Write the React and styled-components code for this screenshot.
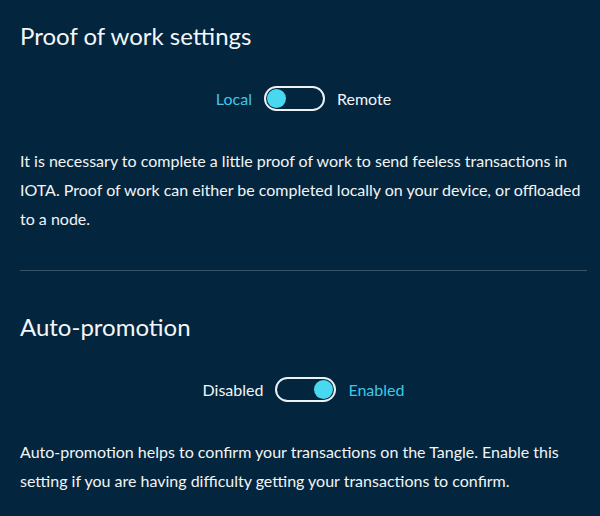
import React, { useState } from 'react'
import styled, { createGlobalStyle, css } from 'styled-components'

const GlobalStyle = createGlobalStyle`
  html, body {
    margin: 0;
    padding: 0;
    background: #03263e;
  }
  body {
    font-family: Lato, "Open Sans", sans-serif;
    color: #f2f4f6;
  }
`

const Page = styled.div`
  width: 600px;
  height: 516px;
  box-sizing: border-box;
  padding: 20px 13px 0 20px;
  background: #03263e;
  overflow: hidden;
`

const Section = styled.section`
  padding-bottom: 37px;
  ${props =>
    props.divided &&
    css`
      border-bottom: 1px solid #3a5467;
      margin-bottom: 40px;
    `}
`

const Title = styled.h2`
  margin: 0;
  font-size: 24px;
  font-weight: 400;
  line-height: 32px;
  color: #f4f6f8;
`

const ToggleRow = styled.div`
  display: flex;
  align-items: center;
  justify-content: center;
  gap: 12px;
  margin: 34px 0 35px;
  font-size: 16px;
`

const Label = styled.span`
  color: ${props => (props.active ? '#3fc6e6' : '#f2f4f6')};
  cursor: pointer;
`

const Switch = styled.button`
  position: relative;
  width: 61px;
  height: 25px;
  box-sizing: border-box;
  border: 2px solid #eef1f4;
  border-radius: 13px;
  background: transparent;
  padding: 0;
  cursor: pointer;
  &::after {
    content: '';
    position: absolute;
    top: 1px;
    left: ${props => (props.on ? '37px' : '1px')};
    width: 19px;
    height: 19px;
    border-radius: 50%;
    background: #48d9f1;
  }
`

const Text = styled.p`
  margin: 0;
  font-size: 16px;
  line-height: 29px;
  color: #f2f4f6;
`

const Toggle = ({ left, right, on, onChange }) => (
  <ToggleRow>
    <Label active={!on} onClick={() => onChange(false)}>{left}</Label>
    <Switch on={on} onClick={() => onChange(!on)} />
    <Label active={on} onClick={() => onChange(true)}>{right}</Label>
  </ToggleRow>
)

export default function App() {
  const [remote, setRemote] = useState(false)
  const [promote, setPromote] = useState(true)

  return (
    <>
      <GlobalStyle />
      <Page>
        <Section divided>
          <Title>Proof of work settings</Title>
          <Toggle left='Local' right='Remote' on={remote} onChange={setRemote} />
          <Text>
            It is necessary to complete a little proof of work to send feeless
            transactions in IOTA. Proof of work can either be completed locally
            on your device, or offloaded to a node.
          </Text>
        </Section>
        <Section>
          <Title>Auto-promotion</Title>
          <Toggle left='Disabled' right='Enabled' on={promote} onChange={setPromote} />
          <Text>
            Auto-promotion helps to confirm your transactions on the Tangle.
            Enable this setting if you are having difficulty getting your
            transactions to confirm.
          </Text>
        </Section>
      </Page>
    </>
  )
}
